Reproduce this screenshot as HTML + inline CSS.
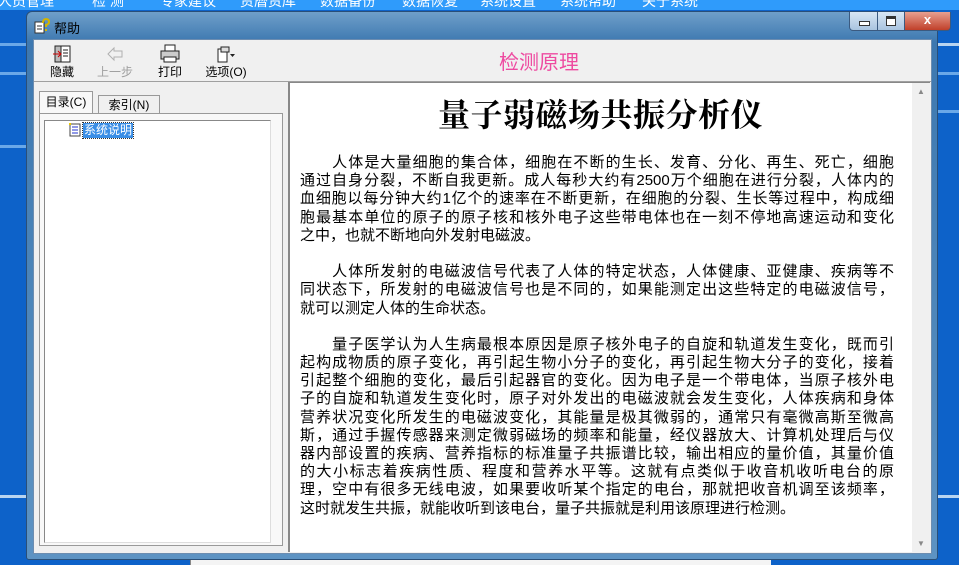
<!DOCTYPE html>
<html><head><meta charset="utf-8"><style>
body{margin:0;width:959px;height:565px;overflow:hidden;background:#0d62c9;font-family:"Liberation Sans","Noto Sans CJK SC",sans-serif;position:relative}
.menu{position:absolute;left:0;top:0;width:959px;height:10px;background:#2f9bfb;overflow:hidden}
.menu span{position:absolute;top:-9px;color:#fff;font-size:14px}
.stripe{position:absolute;left:0;width:959px;height:3px;background:#6aa8e8}
.win{position:absolute;left:26px;top:11px;width:910px;height:547px;background:linear-gradient(#6f9fc9,#3d78b0 30px,#5d93c3);border:1px solid #2a4f78;border-radius:6px 6px 3px 3px}
.title{position:absolute;left:27px;top:6px;font-size:13px;color:#000}
.inner{position:absolute;left:6px;top:27px;width:897px;height:513px;background:#f0f0f0;border:1px solid #6d8db0}
.tb{position:absolute;top:0;font-size:12px;text-align:center;width:50px}
.pane{position:absolute;background:#fff}
.p{font-size:15px;color:#000;margin:0}
.p div{text-align:justify;text-align-last:justify;white-space:nowrap;height:18.2px;line-height:18px;overflow:visible}
.p div.l{text-align-last:left}
.btn{position:absolute;top:0;height:18px;border:1px solid #3b5a80;border-top:none}
</style></head><body>
<div class="menu">
<span style="left:-2px">人员管理</span><span style="left:92px">检 测</span><span style="left:160px">专家建议</span><span style="left:240px">资曆资库</span><span style="left:320px">数据备份</span><span style="left:402px">数据恢复</span><span style="left:480px">系统设置</span><span style="left:560px">系统帮助</span><span style="left:642px">关于系统</span>
</div>
<div class="stripe" style="top:43px;width:26px"></div>
<div class="stripe" style="top:43px;left:936px;width:23px;background:#b8d4f0"></div>
<div class="stripe" style="top:72px;width:26px"></div>
<div class="stripe" style="top:72px;left:936px;width:23px"></div>
<div class="stripe" style="top:110px;left:936px;width:23px"></div>
<div class="stripe" style="top:145px;width:26px"></div>
<div class="stripe" style="top:495px;width:26px;background:#b8d4f0"></div>
<div class="stripe" style="top:495px;left:936px;width:23px;background:#b8d4f0"></div>
<div class="win">
 <svg style="position:absolute;left:7px;top:6px" width="16" height="16"><rect x="1" y="4" width="9" height="11" fill="#fff" stroke="#333"/><line x1="3" y1="8" x2="8" y2="8" stroke="#333"/><line x1="3" y1="11" x2="8" y2="11" stroke="#333"/><path d="M9 5 Q9 1 12 1 Q15 1 15 4 Q15 6 12 7 L12 9" fill="none" stroke="#d4b400" stroke-width="2"/><rect x="11" y="11" width="2" height="2" fill="#d4b400"/></svg>
 <div class="title">帮助</div>
 <div class="btn" style="left:822px;width:27px;background:linear-gradient(#d8e6f4,#a9c4e0);border-radius:0 0 0 4px"><div style="position:absolute;left:9px;top:9px;width:9px;height:3px;background:#fff;border:1px solid #333"></div></div>
 <div class="btn" style="left:850px;width:26px;background:linear-gradient(#d8e6f4,#a9c4e0)"><div style="position:absolute;left:8px;top:4px;width:8px;height:6px;border:1px solid #333;border-top:3px solid #333;background:#fff"></div></div>
 <div class="btn" style="left:877px;width:45px;background:linear-gradient(#e8a090,#c0402a);border-radius:0 0 4px 0;color:#fff;font-weight:bold;font-size:13px;text-align:center;line-height:16px">x</div>
 <div class="inner">
  <div class="tb" style="left:3px"><svg width="20" height="20" style="margin-top:4px"><rect x="3" y="2" width="15" height="16" fill="#fff" stroke="#222"/><rect x="3" y="2" width="6" height="16" fill="#bbb" stroke="#222"/><line x1="11" y1="6" x2="16" y2="6" stroke="#222"/><line x1="11" y1="9" x2="16" y2="9" stroke="#222"/><line x1="11" y1="12" x2="16" y2="12" stroke="#222"/><path d="M1 10 L8 10 M6 7 L9 10 L6 13" stroke="#c00" fill="none"/></svg><div style="margin-top:-4px">隐藏</div></div>
  <div class="tb" style="left:56px;color:#a0a0a0"><svg width="20" height="20" style="margin-top:4px"><path d="M3 10 L9 4 L9 7 L17 7 L17 13 L9 13 L9 16 Z" fill="none" stroke="#b0b0b0"/></svg><div style="margin-top:-4px">上一步</div></div>
  <div class="tb" style="left:111px"><svg width="22" height="20" style="margin-top:4px"><rect x="6" y="1" width="10" height="6" fill="#fff" stroke="#222"/><rect x="2" y="7" width="18" height="8" fill="#ccc" stroke="#222"/><rect x="5" y="13" width="12" height="5" fill="#fff" stroke="#222"/></svg><div style="margin-top:-4px">打印</div></div>
  <div class="tb" style="left:164px;width:56px"><svg width="24" height="20" style="margin-top:4px"><rect x="4" y="5" width="9" height="13" fill="#fff" stroke="#222"/><rect x="7" y="3" width="8" height="5" fill="#ddd" stroke="#222"/><path d="M16 10 L21 10 L18.5 13 Z" fill="#222"/></svg><div style="margin-top:-4px">选项(O)</div></div>
  <div style="position:absolute;left:465px;top:6px;font-size:20px;color:#ee4aa0">检测原理</div>
  <div style="position:absolute;left:0;top:41px;width:897px;height:1px;background:#a0a0a0"></div>
  <div style="position:absolute;left:5px;top:51px;width:52px;height:22px;background:#f8f8f8;border:1px solid #999;border-bottom:none;font-size:12px;line-height:20px;text-align:center">目录(C)</div>
  <div style="position:absolute;left:64px;top:55px;width:60px;height:18px;border:1px solid #999;border-bottom:none;font-size:12px;line-height:18px;text-align:center">索引(N)</div>
  <div style="position:absolute;left:5px;top:73px;width:242px;height:431px;border:1px solid #999;background:#f8f8f8"></div>
  <div class="pane" style="left:10px;top:80px;width:225px;height:421px;border:1px solid #888;border-right-color:#ddd;border-bottom-color:#ddd"></div>
  <svg style="position:absolute;left:35px;top:83px" width="12" height="14"><rect x="1" y="1" width="10" height="12" fill="#fff" stroke="#444"/><path d="M3 4H9M3 7H9M3 10H9" stroke="#23c"/><rect x="0" y="0" width="2" height="2" fill="#ec0"/></svg>
  <div style="position:absolute;left:49px;top:83px;height:15px;background:#3a8ee6;color:#fff;font-size:12px;line-height:15px;padding:0 1px;outline:1px dotted #333">系统说明</div>
  <div class="pane" style="left:254px;top:42px;width:640px;height:469px;border-left:2px solid #888;border-top:1px solid #888;overflow:hidden">
   <div style="position:absolute;right:0;top:0;width:18px;height:469px;background:#f0f0f0"><div style="font-size:8px;color:#888;text-align:center;margin-top:4px">▲</div><div style="font-size:8px;color:#888;text-align:center;position:absolute;bottom:4px;width:18px">▼</div></div>
   <div style="position:absolute;left:148px;top:10px;font-family:'Noto Serif CJK SC',serif;font-size:32px;font-weight:bold;letter-spacing:0.5px;line-height:40px">量子弱磁场共振分析仪</div>
   <div class="p" style="position:absolute;left:10px;top:71px;width:594px">
    <div>&#12288;&#12288;人体是大量细胞的集合体，细胞在不断的生长、发育、分化、再生、死亡，细胞</div>
    <div>通过自身分裂，不断自我更新。成人每秒大约有2500万个细胞在进行分裂，人体内的</div>
    <div>血细胞以每分钟大约1亿个的速率在不断更新，在细胞的分裂、生长等过程中，构成细</div>
    <div>胞最基本单位的原子的原子核和核外电子这些带电体也在一刻不停地高速运动和变化</div>
    <div class="l">之中，也就不断地向外发射电磁波。</div>
    <div class="l"></div>
    <div>&#12288;&#12288;人体所发射的电磁波信号代表了人体的特定状态，人体健康、亚健康、疾病等不</div>
    <div>同状态下，所发射的电磁波信号也是不同的，如果能测定出这些特定的电磁波信号，</div>
    <div class="l">就可以测定人体的生命状态。</div>
    <div class="l"></div>
    <div>&#12288;&#12288;量子医学认为人生病最根本原因是原子核外电子的自旋和轨道发生变化，既而引</div>
    <div>起构成物质的原子变化，再引起生物小分子的变化，再引起生物大分子的变化，接着</div>
    <div>引起整个细胞的变化，最后引起器官的变化。因为电子是一个带电体，当原子核外电</div>
    <div>子的自旋和轨道发生变化时，原子对外发出的电磁波就会发生变化，人体疾病和身体</div>
    <div>营养状况变化所发生的电磁波变化，其能量是极其微弱的，通常只有毫微高斯至微高</div>
    <div>斯，通过手握传感器来测定微弱磁场的频率和能量，经仪器放大、计算机处理后与仪</div>
    <div>器内部设置的疾病、营养指标的标准量子共振谱比较，输出相应的量价值，其量价值</div>
    <div>的大小标志着疾病性质、程度和营养水平等。这就有点类似于收音机收听电台的原</div>
    <div>理，空中有很多无线电波，如果要收听某个指定的电台，那就把收音机调至该频率，</div>
    <div class="l">这时就发生共振，就能收听到该电台，量子共振就是利用该原理进行检测。</div>
   </div>
  </div>
 </div>
</div>
<div style="position:absolute;left:190px;top:560px;width:580px;height:5px;background:#f4f4f4;border-left:1px solid #888"></div>
</body></html>
